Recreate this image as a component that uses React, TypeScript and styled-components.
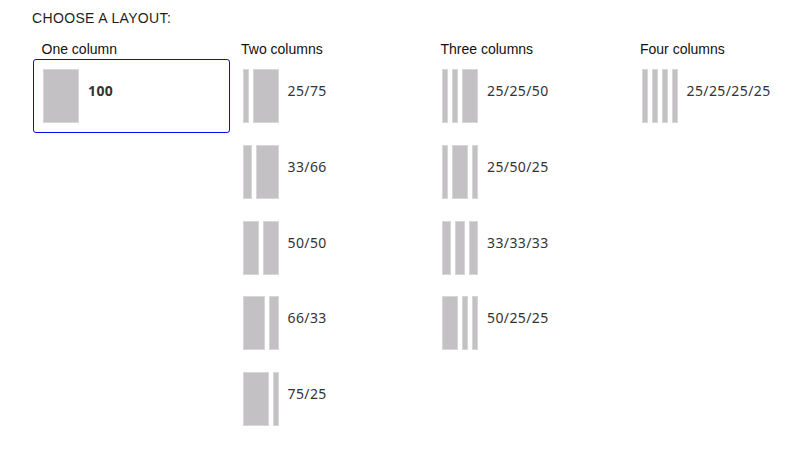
import React, { useState } from "react";
import styled, { createGlobalStyle } from "styled-components";

const GlobalStyle = createGlobalStyle`
  body {
    margin: 0;
    background: #ffffff;
    overflow: hidden;
    font-family: "Liberation Sans", Arial, sans-serif;
  }
`;

interface LayoutOption {
  label: string;
  bars: number[];
}

interface LayoutGroup {
  titulo: string;
  opcoes: LayoutOption[];
}

const grupos: LayoutGroup[] = [
  {
    titulo: "One column",
    opcoes: [{ label: "100", bars: [36] }],
  },
  {
    titulo: "Two columns",
    opcoes: [
      { label: "25/75", bars: [6, 26] },
      { label: "33/66", bars: [9, 23] },
      { label: "50/50", bars: [16, 16] },
      { label: "66/33", bars: [22, 10] },
      { label: "75/25", bars: [26, 6] },
    ],
  },
  {
    titulo: "Three columns",
    opcoes: [
      { label: "25/25/50", bars: [6, 6, 16] },
      { label: "25/50/25", bars: [6, 16, 6] },
      { label: "33/33/33", bars: [9.33, 9.33, 9.33] },
      { label: "50/25/25", bars: [16, 6, 6] },
    ],
  },
  {
    titulo: "Four columns",
    opcoes: [{ label: "25/25/25/25", bars: [6, 6, 6, 6] }],
  },
];

const Pagina = styled.div`
  padding: 10px 0 0 32px;
`;

const Titulo = styled.h2`
  margin: 0;
  font-size: 14px;
  line-height: 17px;
  font-weight: 400;
  letter-spacing: 0.35px;
  color: #1f1f1f;
  text-transform: uppercase;
`;

const Grade = styled.div`
  display: grid;
  grid-template-columns: repeat(4, 197px);
  column-gap: 2.5px;
  margin-top: 14px;
  margin-left: 1px;
`;

const Coluna = styled.div`
  display: flex;
  flex-direction: column;
`;

const NomeColuna = styled.div`
  font-size: 14px;
  line-height: 16px;
  color: #111;
  padding-left: 8.5px;
  margin-bottom: 2px;
`;

const Lista = styled.div`
  display: flex;
  flex-direction: column;
  gap: 1.75px;
`;

const Opcao = styled.button<{ $ativo: boolean }>`
  display: flex;
  align-items: flex-start;
  gap: 9px;
  width: 197px;
  height: 74px;
  box-sizing: border-box;
  padding: 9px;
  margin: 0;
  background: #ffffff;
  border: 1px solid ${({ $ativo }) => ($ativo ? "#0c0ce8" : "transparent")};
  border-radius: 3px;
  cursor: pointer;
  text-align: left;
  outline: none;
`;

const Icone = styled.div`
  display: flex;
  gap: 4px;
  width: 36px;
  height: 54px;
  flex-shrink: 0;
`;

const Barra = styled.div`
  height: 100%;
  box-sizing: border-box;
  background: #c3c1c4;
  border: 1px solid #d7d7d7;
`;

const Rotulo = styled.span<{ $ativo: boolean }>`
  padding-top: 12px;
  font-family: "Noto Sans", "Open Sans", sans-serif;
  font-size: 14px;
  line-height: 19px;
  letter-spacing: 0.4px;
  font-weight: ${({ $ativo }) => ($ativo ? 700 : 400)};
  color: #333;
`;

export default function App() {
  const [selecionado, setSelecionado] = useState("100");

  return (
    <>
      <GlobalStyle />
      <Pagina>
        <Titulo>Choose a layout:</Titulo>
        <Grade>
          {grupos.map((grupo) => (
            <Coluna key={grupo.titulo}>
              <NomeColuna>{grupo.titulo}</NomeColuna>
              <Lista>
                {grupo.opcoes.map((opcao) => {
                  const ativo = opcao.label === selecionado;
                  return (
                    <Opcao
                      key={opcao.label}
                      $ativo={ativo}
                      onClick={() => setSelecionado(opcao.label)}
                    >
                      <Icone>
                        {opcao.bars.map((w, i) => (
                          <Barra key={i} style={{ width: w }} />
                        ))}
                      </Icone>
                      <Rotulo $ativo={ativo}>{opcao.label}</Rotulo>
                    </Opcao>
                  );
                })}
              </Lista>
            </Coluna>
          ))}
        </Grade>
      </Pagina>
    </>
  );
}
